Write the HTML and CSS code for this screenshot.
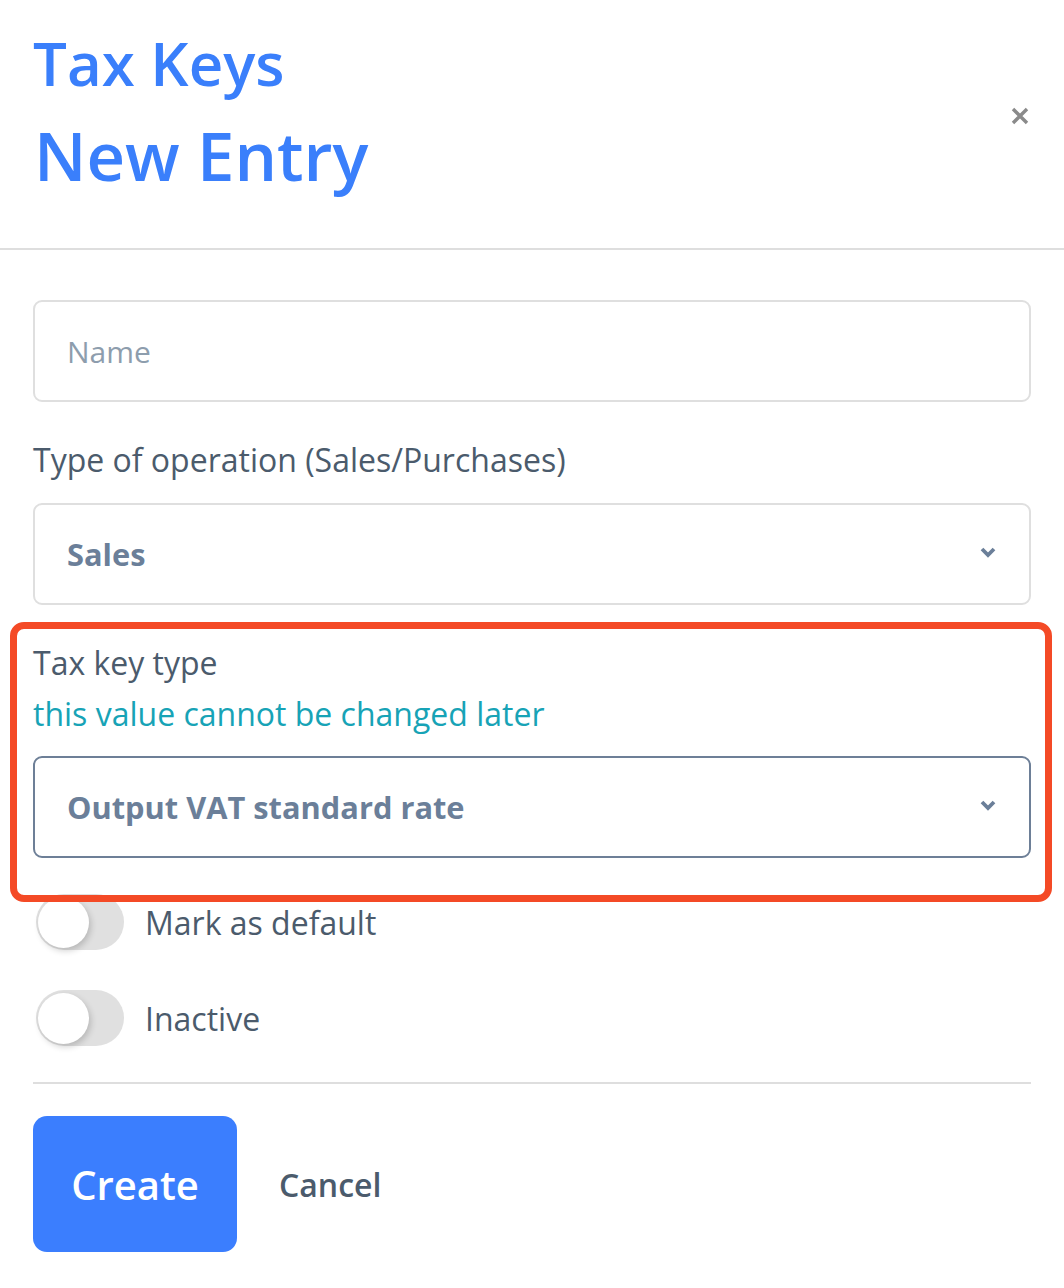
FILE: index.html
```html
<!DOCTYPE html>
<html lang="en">
<head>
<meta charset="utf-8">
<title>Tax Keys - New Entry</title>
<link rel="stylesheet" href="styles.css">
</head>
<body>
<div class="modal">
  <header class="modal-header">
    <div class="titles">
      <h1 class="title-top">Tax Keys</h1>
      <h2 class="title-main">New Entry</h2>
    </div>
    <button class="close" aria-label="Close">
      <svg width="18" height="18" viewBox="0 0 18 18"><path d="M2 2 L16 16 M16 2 L2 16" stroke="#8a8a8a" stroke-width="3.4" stroke-linecap="butt"/></svg>
    </button>
  </header>
  <div class="modal-body">
    <div class="input"><span class="placeholder">Name</span></div>

    <div class="label">Type of operation (Sales/Purchases)</div>
    <div class="select">
      <span class="select-value">Sales</span>
      <svg class="chev" width="16" height="11" viewBox="0 0 16 11"><path d="M2 2 L8 8 L14 2" fill="none" stroke="#6b7f99" stroke-width="3.8"/></svg>
    </div>

    <div class="label label-tax">Tax key type</div>
    <div class="hint">this value cannot be changed later</div>
    <div class="select select-active">
      <span class="select-value">Output VAT standard rate</span>
      <svg class="chev" width="16" height="11" viewBox="0 0 16 11"><path d="M2 2 L8 8 L14 2" fill="none" stroke="#6b7f99" stroke-width="3.8"/></svg>
    </div>

    <div class="toggle-row first">
      <span class="toggle"><span class="knob"></span></span>
      <span class="toggle-label">Mark as default</span>
    </div>
    <div class="toggle-row">
      <span class="toggle"><span class="knob"></span></span>
      <span class="toggle-label">Inactive</span>
    </div>

    <div class="footer">
      <button class="btn-create">Create</button>
      <button class="btn-cancel">Cancel</button>
    </div>
  </div>
  <div class="highlight"></div>
</div>
</body>
</html>
```

FILE: styles.css
```css
html, body {
  margin: 0;
  padding: 0;
  background: #ffffff;
}
body {
  font-family: "Open Sans", "Noto Sans", sans-serif;
  color: #4b5b6c;
}
.modal {
  position: relative;
  width: 1064px;
}
.modal-header {
  display: flex;
  justify-content: space-between;
  align-items: flex-start;
  padding: 28px 35px 53px 33px;
  border-bottom: 2px solid #dedede;
}
.title-top {
  margin: 0;
  font-size: 60px;
  line-height: 70px;
  font-weight: 600;
  color: #3a7ffb;
}
.title-main {
  margin: 17px 0 0 1px;
  font-size: 67px;
  line-height: 80px;
  font-weight: 600;
  color: #3a7ffb;
}
.close {
  margin-top: 79px;
  border: 0;
  background: none;
  padding: 0;
  width: 18px;
  height: 18px;
  display: flex;
}
.modal-body {
  padding: 50px 33px 35px 33px;
}
.input, .select {
  box-sizing: border-box;
  height: 102px;
  border: 2px solid #dfdfdf;
  border-radius: 9px;
  display: flex;
  align-items: center;
  padding: 0 32px;
}
.placeholder {
  font-size: 30px;
  color: #8d9dad;
}
.label {
  font-size: 32px;
  line-height: 44px;
  margin-top: 36px;
  margin-bottom: 21px;
  color: #4b5b6c;
}
.label-tax {
  margin-bottom: 7px;
}
.hint {
  font-size: 32px;
  line-height: 44px;
  color: #17a3b6;
  margin-bottom: 20px;
}
.select {
  justify-content: space-between;
  padding-right: 33px;
}
.select-active {
  border-color: #6d7f97;
}
.select-value {
  font-size: 30.8px;
  font-weight: 700;
  color: #6b7f99;
}
.chev {
  display: block;
  margin-top: -4px;
}
.toggle-row {
  display: flex;
  align-items: center;
  gap: 21px;
  margin-top: 40px;
  padding-left: 3px;
}
.toggle-row.first {
  margin-top: 36px;
}
.toggle {
  position: relative;
  width: 88px;
  height: 56px;
  border-radius: 28px;
  background: #e0e0e0;
  display: flex;
  align-items: center;
  padding-left: 2px;
  box-sizing: border-box;
}
.knob {
  width: 51px;
  height: 51px;
  border-radius: 50%;
  background: #ffffff;
  box-shadow: 2px 3px 6px rgba(0,0,0,0.18);
}
.toggle-label {
  font-size: 32px;
  color: #4b5b6c;
}
.footer {
  border-top: 2px solid #dedede;
  margin-top: 36px;
  padding-top: 32px;
  display: flex;
  align-items: center;
  gap: 42px;
}
.btn-create {
  width: 204px;
  height: 136px;
  border: 0;
  border-radius: 14px;
  background: #3b7efe;
  color: #ffffff;
  font-family: "Open Sans", "Noto Sans", sans-serif;
  font-size: 40px;
  font-weight: 600;
  padding: 0;
}
.btn-cancel {
  border: 0;
  background: none;
  padding: 0;
  font-family: "Open Sans", "Noto Sans", sans-serif;
  font-size: 32px;
  font-weight: 600;
  color: #4b5b6c;
}
.highlight {
  position: absolute;
  left: 10px;
  top: 622px;
  width: 1042px;
  height: 280px;
  box-sizing: border-box;
  border: 7px solid #f44a26;
  border-radius: 14px;
  pointer-events: none;
}
```
